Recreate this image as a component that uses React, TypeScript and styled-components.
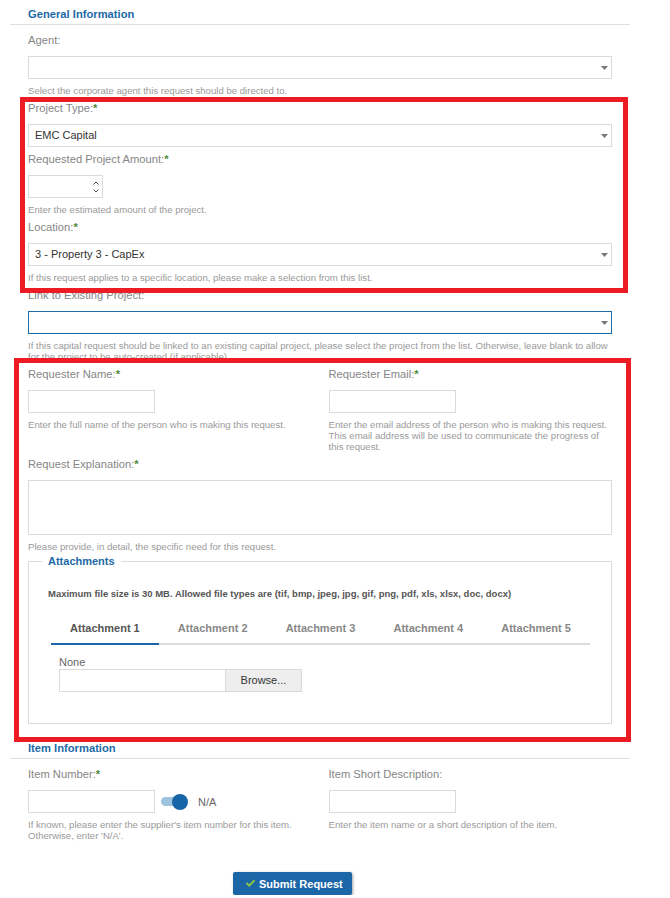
import React from 'react';
import styled, { createGlobalStyle } from 'styled-components';

const GlobalStyle = createGlobalStyle`
  html, body { margin: 0; padding: 0; background: #fff; }
  body { font-family: "Liberation Sans", Arial, sans-serif; }
  * { box-sizing: border-box; }
`;

const BLUE = '#1d69a6';
const BORDER = '#dadada';

const Page = styled.div`
  width: 670px;
  padding: 8px 40px 0 10px;
`;

const Section = styled.section<{ $mt?: number }>`
  margin-top: ${(p) => p.$mt ?? 0}px;
`;

const SectionHeader = styled.h2`
  margin: 0;
  padding: 0 0 3px 18px;
  font-size: 11.2px;
  line-height: 13px;
  font-weight: bold;
  color: ${BLUE};
  border-bottom: 1px solid #dedede;
`;

const SectionBody = styled.div`
  padding: 8px 18px 0;
  display: flex;
  flex-direction: column;
  gap: 5px;
`;

const Highlight = styled.div<{ $t: number; $r: number; $b: number; $l: number }>`
  position: relative;
  display: flex;
  flex-direction: column;
  gap: 5px;
  &::after {
    content: '';
    position: absolute;
    top: ${(p) => -p.$t}px;
    right: ${(p) => -p.$r}px;
    bottom: ${(p) => -p.$b}px;
    left: ${(p) => -p.$l}px;
    border: 5px solid #ed1c24;
    pointer-events: none;
    z-index: 2;
  }
`;

const Field = styled.div`
  display: flex;
  flex-direction: column;
  min-width: 0;
`;

const Label = styled.label`
  display: block;
  font-size: 11.2px;
  line-height: 14px;
  color: #868686;
  margin-bottom: 9px;
`;

const Req = styled.span`
  color: #4f8a3c;
  font-weight: bold;
`;

const Help = styled.div`
  margin-top: 6px;
  font-size: 9.6px;
  line-height: 11px;
  color: #9a9a9a;
`;

const SelectBox = styled.div<{ $focused?: boolean }>`
  height: 23px;
  border: 1px solid ${(p) => (p.$focused ? '#1f6cab' : BORDER)};
  background: #fff;
  display: flex;
  align-items: center;
  padding: 0 3px 0 6px;
`;

const SelectValue = styled.span`
  flex: 1;
  font-size: 11px;
  line-height: 21px;
  color: #333;
`;

const Caret = () => (
  <svg width="7" height="4" viewBox="0 0 7 4">
    <path d="M0 0 H7 L3.5 4 Z" fill="#777" />
  </svg>
);

const Select = ({ value, focused }: { value?: string; focused?: boolean }) => (
  <SelectBox $focused={focused}>
    <SelectValue>{value}</SelectValue>
    <Caret />
  </SelectBox>
);

const TextInput = styled.div<{ $w: number }>`
  width: ${(p) => p.$w}px;
  height: 23px;
  border: 1px solid ${BORDER};
  background: #fff;
`;

const NumberBox = styled.div`
  width: 75px;
  height: 23px;
  border: 1px solid ${BORDER};
  display: flex;
  align-items: center;
  justify-content: flex-end;
  padding-right: 2px;
`;

const Spinner = () => (
  <svg width="8" height="16" viewBox="0 0 8 16">
    <path d="M1.5 5.5 L4 3 L6.5 5.5" stroke="#555" strokeWidth="1" fill="none" />
    <path d="M1.5 10.5 L4 13 L6.5 10.5" stroke="#555" strokeWidth="1" fill="none" />
  </svg>
);

const TextArea = styled.div`
  height: 55px;
  border: 1px solid ${BORDER};
  background: #fff;
`;

const TwoCols = styled.div`
  display: grid;
  grid-template-columns: 1fr 1fr;
  column-gap: 17px;
`;

const Attachments = styled.fieldset`
  margin: -3px 0 0;
  padding: 0 19px 31px;
  border: 1px solid ${BORDER};
  min-width: 0;
`;

const Legend = styled.legend`
  padding: 0 6px;
  margin-left: -6px;
  font-size: 11px;
  line-height: 14px;
  font-weight: bold;
  color: ${BLUE};
`;

const MaxText = styled.div`
  margin-top: 20px;
  font-size: 9.5px;
  line-height: 11px;
  font-weight: bold;
  color: #555;
`;

const Tabs = styled.div`
  margin: 22px 2px 0 3px;
  display: grid;
  grid-template-columns: repeat(5, 1fr);
`;

const Tab = styled.div<{ $active?: boolean }>`
  text-align: center;
  font-size: 11px;
  line-height: 14px;
  font-weight: bold;
  padding-bottom: 8px;
  color: ${(p) => (p.$active ? '#555' : '#888')};
  border-bottom: 2px solid ${(p) => (p.$active ? '#1a66a6' : '#dddddd')};
`;

const TabPanel = styled.div`
  padding: 11px 0 0 11px;
`;

const FileName = styled.div`
  font-size: 11px;
  line-height: 13px;
  color: #666;
`;

const FileRow = styled.div`
  display: flex;
  width: 243px;
  height: 23px;
`;

const FileText = styled.div`
  flex: 1;
  border: 1px solid ${BORDER};
  background: #fff;
`;

const Browse = styled.div`
  width: 76px;
  border: 1px solid ${BORDER};
  border-left: none;
  background: #eeeeee;
  font-size: 11px;
  line-height: 21px;
  color: #333;
  text-align: center;
`;

const InlineRow = styled.div`
  display: flex;
  align-items: center;
`;

const Toggle = styled.div`
  position: relative;
  width: 27px;
  height: 16px;
  margin-left: 6px;
  display: flex;
  align-items: center;
`;

const ToggleTrack = styled.div`
  width: 24px;
  height: 9px;
  border-radius: 5px;
  background: #9dc3de;
`;

const ToggleKnob = styled.div`
  position: absolute;
  right: 0;
  top: 0;
  width: 16px;
  height: 16px;
  border-radius: 50%;
  background: #1764a6;
`;

const ToggleText = styled.span`
  margin-left: 10px;
  font-size: 11px;
  color: #666;
`;

const ButtonRow = styled.div`
  margin-top: 31px;
  padding-left: 223px;
`;

const SubmitButton = styled.button`
  display: inline-flex;
  align-items: center;
  gap: 3px;
  height: 23px;
  padding: 0 9px 0 12px;
  border: none;
  border-radius: 2px;
  background: #1b66a6;
  color: #fff;
  font-family: "Liberation Sans", Arial, sans-serif;
  font-size: 11px;
  font-weight: bold;
  box-shadow: 1px 1px 3px rgba(0, 0, 0, 0.35);
  cursor: pointer;
`;

const CheckIcon = () => (
  <svg width="11" height="9" viewBox="0 0 11 9">
    <path d="M0.8 4.6 L2.2 3.2 L4.2 5.2 L8.8 0.6 L10.2 2 L4.2 8 Z" fill="#8dc63f" />
  </svg>
);

export default function App() {
  return (
    <>
      <GlobalStyle />
      <Page>
        <Section>
          <SectionHeader>General Information</SectionHeader>
          <SectionBody>
            <Field>
              <Label>Agent:</Label>
              <Select />
              <Help>Select the corporate agent this request should be directed to.</Help>
            </Field>
            <Highlight $t={4} $r={16} $b={10} $l={8}>
              <Field>
                <Label>
                  Project Type:<Req>*</Req>
                </Label>
                <Select value="EMC Capital" />
              </Field>
              <Field>
                <Label>
                  Requested Project Amount:<Req>*</Req>
                </Label>
                <NumberBox>
                  <Spinner />
                </NumberBox>
                <Help>Enter the estimated amount of the project.</Help>
              </Field>
              <Field>
                <Label>
                  Location:<Req>*</Req>
                </Label>
                <Select value="3 - Property 3 - CapEx" />
                <Help>If this request applies to a specific location, please make a selection from this list.</Help>
              </Field>
            </Highlight>
            <Field>
              <Label>Link to Existing Project:</Label>
              <Select focused />
              <Help>
                If this capital request should be linked to an existing capital project, please select the project
                from the list. Otherwise, leave blank to allow for the project to be auto-created (if applicable).
              </Help>
            </Field>
            <Highlight $t={9} $r={19} $b={18} $l={14}>
              <TwoCols>
                <Field>
                  <Label>
                    Requester Name:<Req>*</Req>
                  </Label>
                  <TextInput $w={127} />
                  <Help>Enter the full name of the person who is making this request.</Help>
                </Field>
                <Field>
                  <Label>
                    Requester Email:<Req>*</Req>
                  </Label>
                  <TextInput $w={127} />
                  <Help>
                    Enter the email address of the person who is making this request. This email address will be used
                    to communicate the progress of this request.
                  </Help>
                </Field>
              </TwoCols>
              <Field>
                <Label>
                  Request Explanation:<Req>*</Req>
                </Label>
                <TextArea />
                <Help>Please provide, in detail, the specific need for this request.</Help>
              </Field>
              <Attachments>
                <Legend>Attachments</Legend>
                <MaxText>
                  Maximum file size is 30 MB. Allowed file types are (tif, bmp, jpeg, jpg, gif, png, pdf, xls, xlsx,
                  doc, docx)
                </MaxText>
                <Tabs>
                  <Tab $active>Attachment 1</Tab>
                  <Tab>Attachment 2</Tab>
                  <Tab>Attachment 3</Tab>
                  <Tab>Attachment 4</Tab>
                  <Tab>Attachment 5</Tab>
                </Tabs>
                <TabPanel>
                  <FileName>None</FileName>
                  <FileRow>
                    <FileText />
                    <Browse>Browse...</Browse>
                  </FileRow>
                </TabPanel>
              </Attachments>
            </Highlight>
          </SectionBody>
        </Section>

        <Section $mt={18}>
          <SectionHeader>Item Information</SectionHeader>
          <SectionBody>
            <TwoCols>
              <Field>
                <Label>
                  Item Number:<Req>*</Req>
                </Label>
                <InlineRow>
                  <TextInput $w={127} />
                  <Toggle>
                    <ToggleTrack />
                    <ToggleKnob />
                  </Toggle>
                  <ToggleText>N/A</ToggleText>
                </InlineRow>
                <Help>
                  If known, please enter the supplier's item number for this item. Otherwise, enter 'N/A'.
                </Help>
              </Field>
              <Field>
                <Label>Item Short Description:</Label>
                <TextInput $w={127} />
                <Help>Enter the item name or a short description of the item.</Help>
              </Field>
            </TwoCols>
          </SectionBody>
        </Section>

        <ButtonRow>
          <SubmitButton type="button">
            <CheckIcon />
            Submit Request
          </SubmitButton>
        </ButtonRow>
      </Page>
    </>
  );
}
